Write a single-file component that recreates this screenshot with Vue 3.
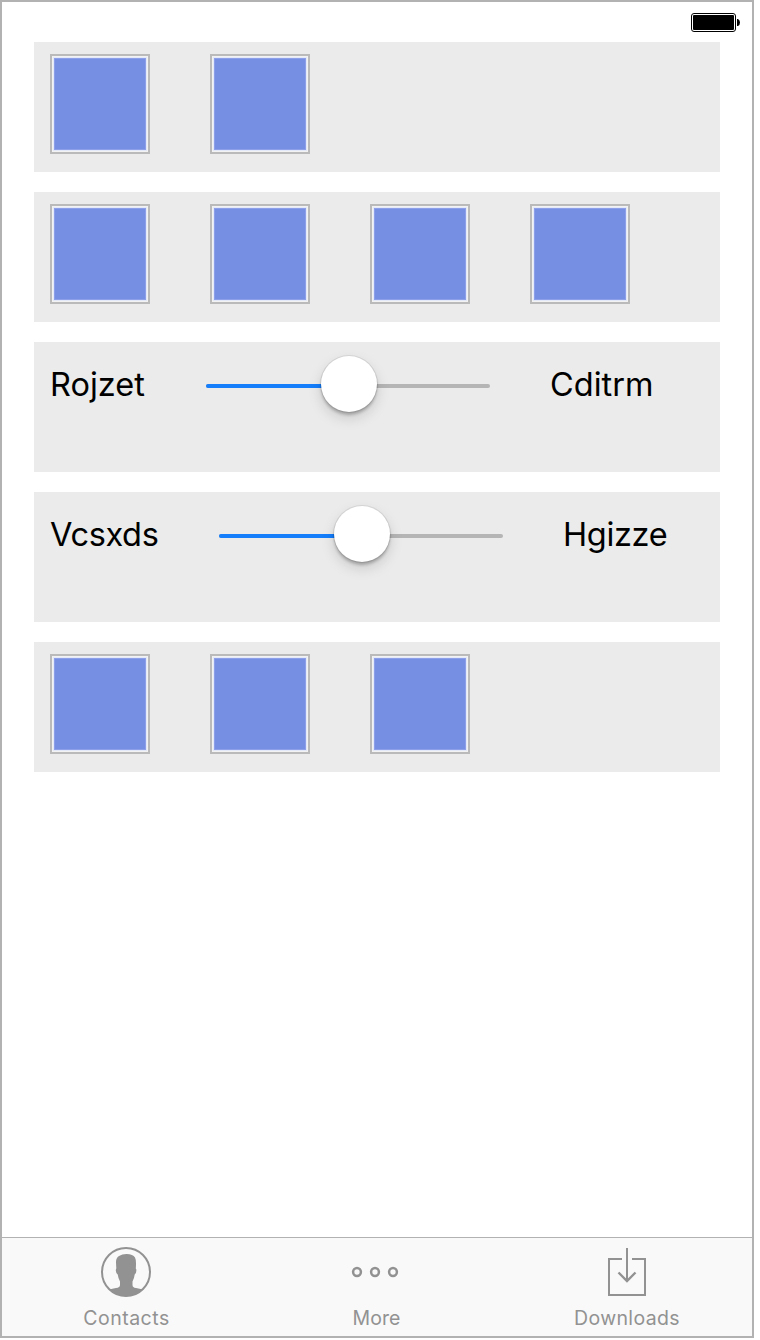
<script setup>
const rows = [
  { kind: 'boxes', count: 2 },
  { kind: 'boxes', count: 4 },
  { kind: 'slider', left: 'Rojzet', right: 'Cditrm', size: 'short' },
  { kind: 'slider', left: 'Vcsxds', right: 'Hgizze', size: 'long' },
  { kind: 'boxes', count: 3 }
]
</script>

<template>
  <div class="phone">
    <header class="status">
      <svg width="50" height="20" viewBox="0 0 50 20">
        <rect x="0.5" y="0.5" width="44" height="18" rx="2.5" fill="#fff" stroke="#000" />
        <rect x="2" y="2" width="41" height="15" rx="1" fill="#000" />
        <path d="M46 6h1q2 1 2 3.500t-2 3.500h-1z" fill="#000" />
      </svg>
    </header>
    <main class="rows">
      <section v-for="(row, i) in rows" :key="i" class="row">
        <template v-if="row.kind === 'boxes'">
          <div v-for="n in row.count" :key="n" class="box"><div class="fill"></div></div>
        </template>
        <template v-else>
          <span class="label" :class="row.size">{{ row.left }}</span>
          <div class="slider">
            <div class="track"><div class="progress"></div></div>
            <div class="thumb"></div>
          </div>
          <span class="label" :class="row.size">{{ row.right }}</span>
        </template>
      </section>
    </main>
    <nav class="tabs">
      <div class="tab">
        <svg width="52" height="52" viewBox="0 0 52 52">
          <circle cx="26" cy="26" r="24" fill="none" stroke="#929292" stroke-width="2" />
          <path fill="#929292" d="M9.500 43.500Q12 42.800 16 42 20 41.500 20 39V35.500Q18.300 32.500 17.700 28.500 16 27.500 15.800 24.500 15.800 22.800 16.300 22.500L16 16.500Q15.800 12 19 10 22 7.900 26.500 7.900 33 8 35 11.500 36.500 14 35.800 22.500 36.500 22.800 36.300 25 36.200 27.800 34.700 28.500 34.200 32.500 32.500 35.500V39Q32.500 41.500 36 42 40 42.800 42.500 43.500A24 24 0 0 1 9.500 43.500Z" />
        </svg>
        <span class="contacts">Contacts</span>
      </div>
      <div class="tab">
        <svg width="52" height="52" viewBox="0 0 52 52" fill="none" stroke="#929292" stroke-width="2.500">
          <circle cx="7" cy="26" r="3.900" />
          <circle cx="25" cy="26" r="3.900" />
          <circle cx="43" cy="26" r="3.900" />
        </svg>
        <span class="more">More</span>
      </div>
      <div class="tab">
        <svg width="52" height="52" viewBox="0 0 52 52" fill="none" stroke="#929292" stroke-width="2">
          <path d="M22 13H9V49H45V13H32M27 2V35" />
          <path d="M18.500 26.500 27 35 35.500 26.500" stroke-width="2.400" />
        </svg>
        <span class="downloads">Downloads</span>
      </div>
    </nav>
  </div>
</template>

<style>
body {
  background: #fff;
}
</style>

<style scoped>
.phone {
  box-sizing: border-box;
  width: 754px;
  height: 1338px;
  border: 2px solid #b2b2b2;
  display: flex;
  flex-direction: column;
  background: #fff;
  font-family: Inter, "Liberation Sans", sans-serif;
}
.status {
  height: 40px;
  box-sizing: border-box;
  padding: 11px 11px 0 0;
  display: flex;
  justify-content: flex-end;
}
.rows {
  flex: 1;
  padding: 0 32px;
  display: flex;
  flex-direction: column;
  gap: 20px;
}
.row {
  box-sizing: border-box;
  height: 130px;
  padding: 12px 16px 0;
  display: flex;
  align-items: flex-start;
  gap: 60px;
  background: #ebebeb;
}
.box {
  box-sizing: border-box;
  width: 100px;
  height: 100px;
  border: 2px solid #bababa;
  padding: 1px;
  background: #f2f2f2;
}
.fill {
  box-sizing: border-box;
  width: 94px;
  height: 94px;
  border: 1px solid #e4e9fa;
  background: #778fe2;
  box-shadow: inset 0 0 0 1px #8c9fe8;
}
.label {
  height: 61px;
  font-size: 32.500px;
  line-height: 61px;
  color: #000;
  white-space: nowrap;
}
.short {
  width: 96px;
  letter-spacing: 0;
}
.long {
  width: 109px;
  letter-spacing: -0.350px;
}
.slider {
  position: relative;
  width: 284px;
  height: 60px;
  display: flex;
  align-items: flex-start;
}
.track {
  width: 284px;
  height: 4px;
  margin-top: 30px;
  border-radius: 2px;
  background: #b5b5b5;
  overflow: hidden;
}
.progress {
  width: 50%;
  height: 4px;
  background: #147efb;
}
.thumb {
  position: absolute;
  left: 115px;
  top: 2px;
  width: 56px;
  height: 56px;
  border-radius: 50%;
  background: #fff;
  box-shadow: 0 0 0 1px rgba(0, 0, 0, 0.08), 0 3px 3px rgba(0, 0, 0, 0.22), 0 6px 14px rgba(0, 0, 0, 0.15);
}
.tabs {
  box-sizing: border-box;
  height: 99px;
  border-top: 1px solid #b2b2b2;
  display: flex;
  background: #f9f9f9;
}
.tab {
  width: 250px;
  box-sizing: border-box;
  padding: 8px 2px 0 0;
  display: flex;
  flex-direction: column;
  align-items: center;
  font-size: 19.500px;
  line-height: 24px;
  letter-spacing: 0.500px;
  color: #929292;
}
.tab span {
  margin-top: 8px;
}
.tab .contacts {
  padding-left: 1px;
}
.tab .more {
  padding-left: 1px;
  letter-spacing: 0.100px;
}
.tab .downloads {
  padding-left: 2px;
  letter-spacing: 0.350px;
}
.tab svg {
  display: block;
}
</style>
